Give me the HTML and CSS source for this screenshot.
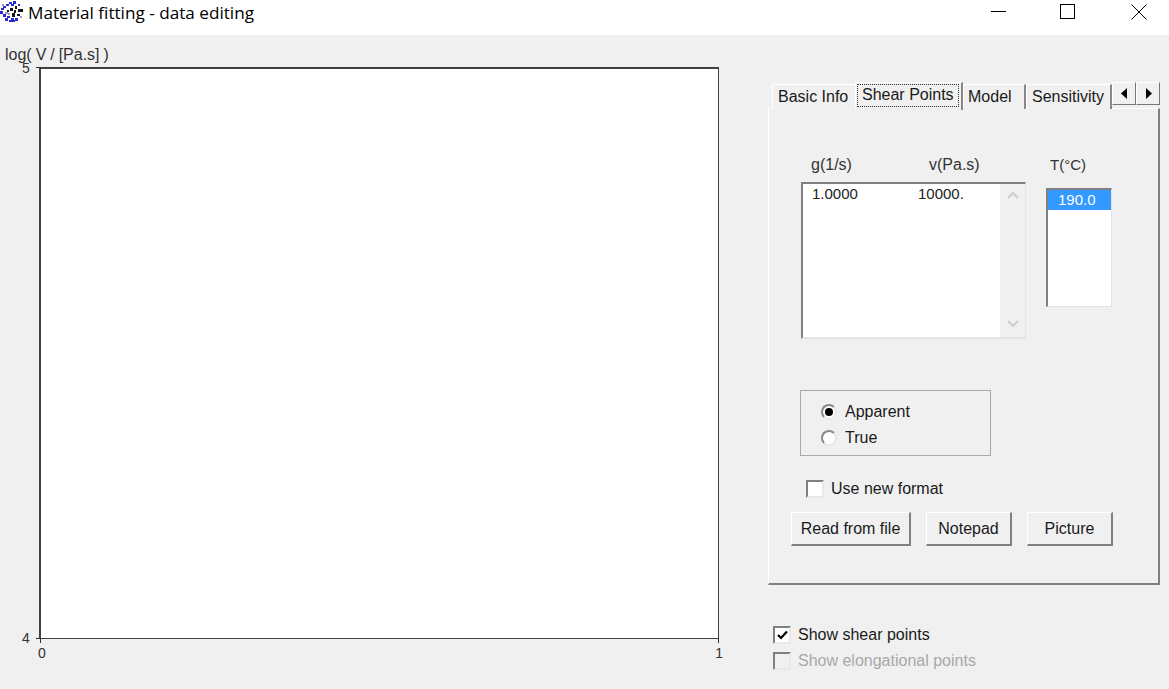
FILE: index.html
```html
<!DOCTYPE html>
<html lang="en">
<head>
<meta charset="utf-8">
<title>Material fitting - data editing</title>
<link rel="stylesheet" href="styles.css">
</head>
<body>
<div class="window">
  <header class="titlebar">
    <svg class="app-icon" width="24" height="24" viewBox="0 0 24 24" aria-hidden="true">
      <g fill="#2a2ad0">
        <rect x="9" y="1" width="3" height="2"/><rect x="13" y="0" width="3" height="3"/><rect x="6" y="3" width="3" height="2"/><rect x="11" y="3" width="3" height="2"/>
        <rect x="1" y="7" width="3" height="2"/><rect x="3" y="13" width="3" height="3"/><rect x="0" y="10" width="3" height="3"/><rect x="5" y="17" width="3" height="3"/>
        <rect x="9" y="19" width="6" height="2"/><rect x="15" y="17" width="3" height="3"/><rect x="18" y="3" width="2" height="2"/><rect x="7" y="15" width="3" height="2"/>
        <rect x="3" y="5" width="3" height="2"/><rect x="11" y="17" width="3" height="2"/>
      </g>
      <g fill="#181818">
        <rect x="10" y="7" width="3" height="3"/><rect x="14" y="9" width="2" height="3"/><rect x="18" y="8" width="5" height="3"/><rect x="12" y="12" width="3" height="4"/>
        <rect x="17" y="13" width="3" height="2"/><rect x="7" y="9" width="2" height="2"/><rect x="15" y="5" width="2" height="3"/>
      </g>
      <g fill="#9a9ac0"><rect x="5" y="11" width="3" height="2"/><rect x="2" y="3" width="2" height="2"/><rect x="20" y="15" width="2" height="2"/><rect x="8" y="12" width="2" height="2"/></g>
    </svg>
    <h1 class="title">Material fitting - data editing</h1>
    <div class="caption-buttons">
      <svg width="15" height="15" viewBox="0 0 15 15" aria-hidden="true"><path d="M0 7.5H15" stroke="#000" fill="none"/></svg>
      <svg width="15" height="15" viewBox="0 0 15 15" aria-hidden="true"><rect x=".5" y=".5" width="14" height="14" stroke="#000" fill="none"/></svg>
      <svg width="16" height="16" viewBox="0 0 16 16" aria-hidden="true"><path d="M.5.5L15.5 15.5M15.5.5L.5 15.5" stroke="#000" fill="none"/></svg>
    </div>
  </header>
  <main class="content">
    <section class="chart">
      <div class="axis-title">log( V / [Pa.s] )</div>
      <div class="plot">
        <span class="tick y-top">5</span>
        <span class="tick y-bottom">4</span>
        <span class="tick x-left">0</span>
        <span class="tick x-right">1</span>
        <i class="mark mark-h"></i>
        <i class="mark mark-v"></i>
        <i class="mark mark-top"></i>
        <i class="mark mark-right"></i>
      </div>
    </section>
    <section class="side">
      <nav class="tabs">
        <span class="tab tab-basic">Basic Info</span>
        <span class="tab tab-active"><span class="focus">Shear Points</span></span>
        <span class="tab tab-model">Model</span>
        <span class="tab tab-sens">Sensitivity</span>
        <span class="spin">
          <button class="spin-btn" aria-label="Previous"><svg width="7" height="11" viewBox="0 0 7 11"><path d="M6 0V11L0 5.5Z"/></svg></button>
          <button class="spin-btn" aria-label="Next"><svg width="7" height="11" viewBox="0 0 7 11"><path d="M1 0V11L7 5.5Z"/></svg></button>
        </span>
      </nav>
      <div class="panel">
        <div class="lists">
          <div class="data-col">
            <div class="col-heads"><span class="head-g">g(1/s)</span><span class="head-v">v(Pa.s)</span></div>
            <div class="listbox">
              <div class="rows"><span class="cell-g">1.0000</span><span>10000.</span></div>
              <div class="scrollbar">
                <svg width="12" height="8" viewBox="0 0 12 8"><path d="M1 7L6 2L11 7" stroke="#cdcdcd" stroke-width="2" fill="none"/></svg>
                <svg width="12" height="8" viewBox="0 0 12 8"><path d="M1 1L6 6L11 1" stroke="#cdcdcd" stroke-width="2" fill="none"/></svg>
              </div>
            </div>
          </div>
          <div class="temp-col">
            <div class="temp-head">T(°C)</div>
            <div class="templist"><div class="temp-selected">190.0</div></div>
          </div>
        </div>
        <fieldset class="group">
          <label class="radio-row"><span class="radio on"></span>Apparent</label>
          <label class="radio-row"><span class="radio"></span>True</label>
        </fieldset>
        <label class="check-row format"><span class="check"></span>Use new format</label>
        <div class="buttons">
          <button class="btn btn-read">Read from file</button>
          <button class="btn btn-note">Notepad</button>
          <button class="btn btn-pic">Picture</button>
        </div>
      </div>
      <div class="shows">
        <label class="check-row"><span class="check"><svg width="11" height="10" viewBox="0 0 11 10"><path d="M1 5L4 8L10 1.5" stroke="#000" stroke-width="2.2" fill="none"/></svg></span>Show shear points</label>
        <label class="check-row disabled"><span class="check off"></span>Show elongational points</label>
      </div>
    </section>
  </main>
</div>
</body>
</html>
```
FILE: styles.css
```css
* { box-sizing: border-box; }
html, body { margin: 0; height: 100%; overflow: hidden; }
body { background: #f0f0f0; font-family: "Liberation Sans", Arial, sans-serif; font-size: 16px; color: #1a1a1a; }
.window { width: 1169px; height: 689px; display: flex; flex-direction: column; }
.titlebar { height: 35px; flex: none; background: #fff; display: flex; align-items: flex-start; }
.app-icon { flex: none; margin-top: 1px; }
.title { margin: 3px 0 0 4px; font: 400 17.15px/20px "Open Sans", "Noto Sans", sans-serif; color: #000; }
.caption-buttons { margin-left: auto; width: 178px; display: flex; gap: 54px; padding-top: 4px; }
.caption-buttons svg { display: block; flex: none; }
.caption-buttons svg:last-child { margin-left: 2px; }
.content { flex: 1; display: flex; min-height: 0; }
.chart { width: 768px; flex: none; padding: 11px 0 0 5px; }
.axis-title { height: 21px; line-height: 18px; font-size: 16px; word-spacing: -0.5px; white-space: nowrap; color: #333; }
.plot { position: relative; width: 680px; height: 572px; margin-left: 34px; background: #fff; border: 1px solid #404040; border-top-width: 2px; border-left-width: 2px; }
.tick { position: absolute; font-size: 14px; line-height: 14px; color: #333; }
.y-top { left: -19px; top: -8px; }
.y-bottom { left: -19px; bottom: -7px; }
.x-left { left: -3px; bottom: -22px; }
.x-right { right: -5px; bottom: -22px; }
.mark { position: absolute; background: #303030; }
.mark-h { left: -5px; bottom: -1px; width: 5px; height: 1px; }
.mark-v { left: -1px; bottom: -5px; width: 1px; height: 5px; }
.mark-top { left: -5px; top: -2px; width: 5px; height: 1px; }
.mark-right { right: -1px; bottom: -5px; width: 1px; height: 5px; }
.side { flex: 1; padding-top: 47px; display: flex; flex-direction: column; align-items: flex-start; }
.tabs { display: flex; align-items: flex-end; height: 27px; position: relative; z-index: 1; margin-left: 4px; margin-bottom: -1px; }
.tab { height: 25px; line-height: 24px; padding: 0 5px; border-top: 1px solid #fff; border-left: 1px solid #fff; border-right: 2px solid #888; white-space: nowrap; background: #f0f0f0; }
.tab-basic { width: 83px; border-right: 0; border-radius: 2px 0 0 0; }
.tab-active { width: 108px; height: 28px; line-height: 20px; padding: 1px 2px 0 1px; margin-bottom: -1px; }
.focus { display: block; height: 23px; border: 1px dotted #333; padding-left: 4px; }
.tab-model { width: 63px; padding-left: 4px; }
.tab-sens { width: 86px; overflow: hidden; }
.spin { display: flex; align-self: flex-start; }
.spin-btn { width: 24px; height: 23px; margin: 0; padding: 0; background: #f0f0f0; border: 1px solid; border-color: #fff #777 #777 #fff; display: flex; align-items: center; justify-content: center; }
.panel { width: 392px; height: 477px; background: #f0f0f0; border: 1px solid; border-color: #fff #808080 #808080 #fff; border-right-width: 2px; border-bottom-width: 2px; padding: 45px 0 0 22px; }
.lists { display: flex; align-items: flex-start; }
.data-col { width: 225px; margin-left: 10px; }
.col-heads { height: 28px; padding: 1px 0 0 10px; line-height: 20px; display: flex; color: #333; }
.head-g { width: 118px; }
.listbox { height: 157px; width: 225px; display: flex; background: #fff; border: 2px solid; border-color: #808080 #e4e4e4 #e4e4e4 #808080; border-right-width: 1px; font-size: 15px; }
.rows { flex: 1; display: flex; padding: 1px 0 0 9px; line-height: 18px; color: #222; }
.cell-g { width: 106px; }
.scrollbar { width: 25px; background: #f0f0f0; display: flex; flex-direction: column; justify-content: space-between; align-items: center; padding: 7px 0 9px; }
.temp-col { margin-left: 20px; font-size: 15px; }
.temp-head { height: 34px; padding: 1px 0 0 4px; line-height: 20px; color: #333; }
.templist { width: 66px; height: 119px; background: #fff; border: 1px solid #e4e4e4; border-top: 2px solid #808080; border-left: 2px solid #808080; }
.temp-selected { height: 20px; line-height: 20px; background: #3399ff; color: #fff; padding-left: 10px; }
.group { width: 191px; height: 66px; margin: 51px 0 0 9px; padding: 8px 0 0 20px; border: 1px solid #a9a9a9; background: #f0f0f0; }
.radio-row { display: flex; align-items: center; height: 26px; gap: 8px; }
.radio { width: 16px; height: 16px; border-radius: 50%; background: #fff; border: 2px solid; border-color: #8a8a8a #e8e8e8 #e8e8e8 #8a8a8a; position: relative; }
.radio.on::after { content: ""; position: absolute; left: 2px; top: 2px; width: 8px; height: 8px; border-radius: 50%; background: #000; }
.check-row { display: flex; align-items: center; gap: 7px; height: 26px; }
.check { width: 18px; height: 18px; flex: none; background: #fff; border: 2px solid; border-color: #808080 #e8e8e8 #e8e8e8 #808080; display: flex; align-items: center; justify-content: center; }
.check.off { background: #f0f0f0; }
.format { margin: 20px 0 0 15px; }
.buttons { display: flex; margin-top: 10px; }
.btn { height: 34px; margin: 0 15px 0 0; padding: 0; font: inherit; color: #1a1a1a; background: #f0f0f0; border: 1px solid; border-color: #fff #808080 #808080 #fff; border-right-width: 2px; border-bottom-width: 2px; }
.btn-read { width: 120px; }
.btn-note { width: 86px; }
.btn-pic { width: 86px; }
.shows { margin: 37px 0 0 5px; }
.disabled { color: #a8a8a8; }
```
